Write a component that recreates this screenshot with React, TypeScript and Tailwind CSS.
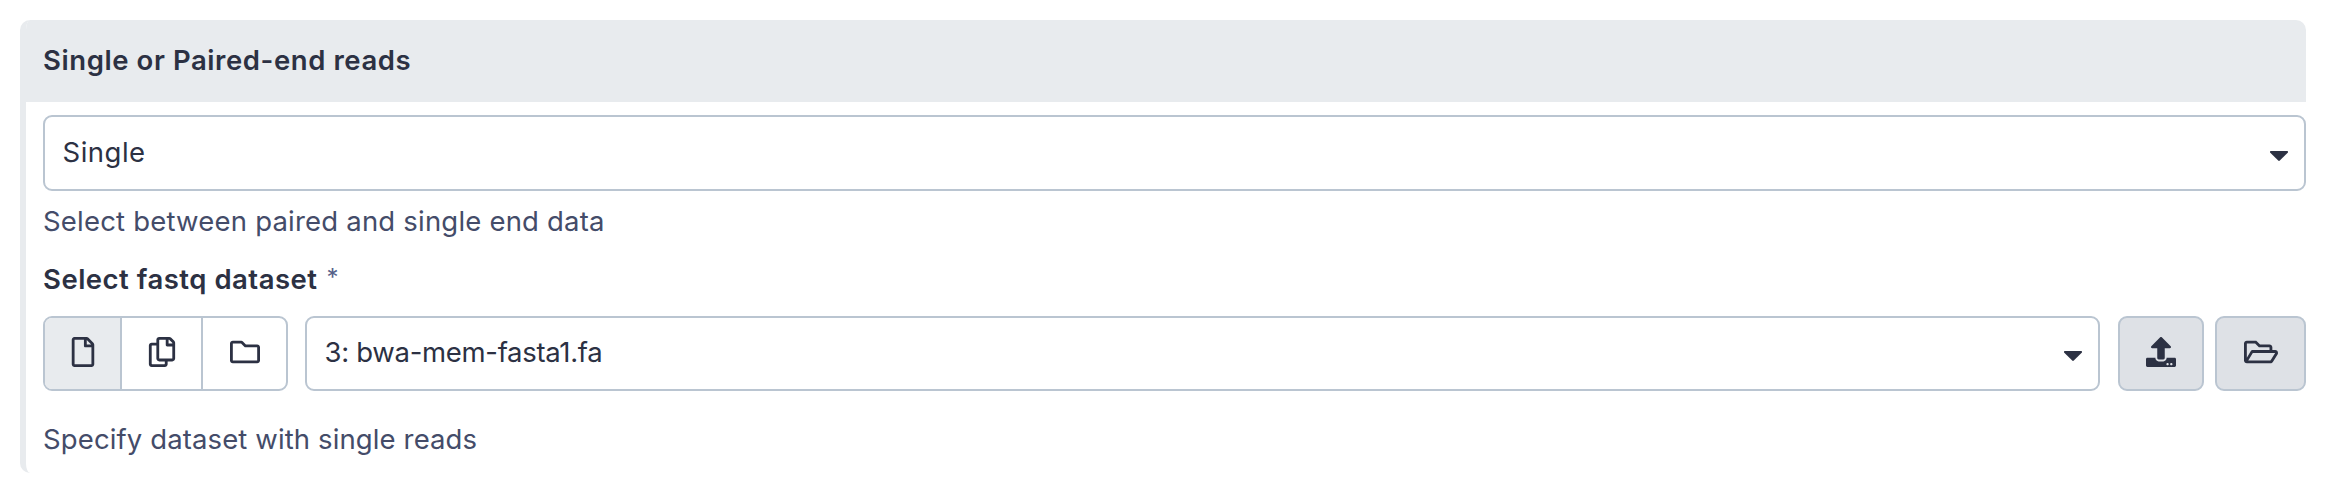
import type { ReactNode } from "react";
import { FaRegCopy, FaRegFile, FaRegFolder, FaRegFolderOpen, FaUpload } from "react-icons/fa";

function Caret() {
  return (
    <svg viewBox="0 0 18 10" className="h-[10px] w-[18px] shrink-0" fill="currentColor">
      <path d="M1 0h16c.9 0 1.3 1 .7 1.7L9.8 9.6c-.5.5-1.1.5-1.6 0L.3 1.7C-.3 1 .1 0 1 0z" />
    </svg>
  );
}

function Select({ children, className }: { children: ReactNode; className: string }) {
  return (
    <div
      className={`flex items-center justify-between rounded-[9px] border-2 border-[#bac5d1] bg-white pl-[17.5px] pr-4 ${className}`}
    >
      {children}
      <span className="pt-[5px]">
        <Caret />
      </span>
    </div>
  );
}

export default function App() {
  return (
    <main className="h-[477px] w-[2351px] bg-white pl-5 pr-[45px] pt-5 font-['Inter',sans-serif] text-[27.5px] leading-[40px] text-[#2c3143]">
      <section className="h-[453px] overflow-hidden whitespace-nowrap rounded-[10px] border-l-[6px] border-[#e8ebee]">
        <header className="flex h-[82px] items-center bg-[#e8ebee] pb-[3px] pl-[17px]">
          <h2 className="font-semibold tracking-[0.58px]">Single or Paired-end reads</h2>
        </header>
        <div className="flex flex-col pl-[17px] pt-[13px]">
          <Select className="h-[76px] w-full">
            <span className="pb-[3px] tracking-[0.5px]">Single</span>
          </Select>
          <p className="mt-[10px] tracking-[0.2px] text-[#444c69]">Select between paired and single end data</p>
          <div className="mt-[18px] flex gap-[9px]">
            <label className="font-semibold tracking-[0.5px]">Select fastq dataset</label>
            <span className="text-[24px] leading-[38px] text-[#56618a]">*</span>
          </div>
          <div className="mt-[17px] flex h-[75px]">
            <div className="flex w-[245px] overflow-hidden rounded-[9px] border-2 border-[#bac5d1]">
              <button className="flex w-[77px] items-center justify-center border-r-2 border-[#bac5d1] bg-[#e8ebee] pb-[3px]">
                <FaRegFile size={30} />
              </button>
              <button className="flex w-[81px] items-center justify-center border-r-2 border-[#bac5d1] pb-[3px]">
                <FaRegCopy size={30} />
              </button>
              <button className="flex flex-1 items-center justify-center pb-[3px]">
                <FaRegFolder size={30} />
              </button>
            </div>
            <Select className="ml-[17px] flex-1">
              <span className="pb-[3px] tracking-[-0.3px]">3: bwa-mem-fasta1.fa</span>
            </Select>
            <button className="ml-[18px] flex w-[86px] items-center justify-center rounded-[9px] border-2 border-[#bac5d1] bg-[#dee1e6] pb-[3px]">
              <FaUpload size={30} />
            </button>
            <button className="ml-[11px] flex w-[91px] items-center justify-center rounded-[9px] border-2 border-[#bac5d1] bg-[#dee1e6] pb-[3px]">
              <FaRegFolderOpen size={34} />
            </button>
          </div>
          <p className="mt-[28px] tracking-[0.12px] text-[#444c69]">Specify dataset with single reads</p>
        </div>
      </section>
    </main>
  );
}
